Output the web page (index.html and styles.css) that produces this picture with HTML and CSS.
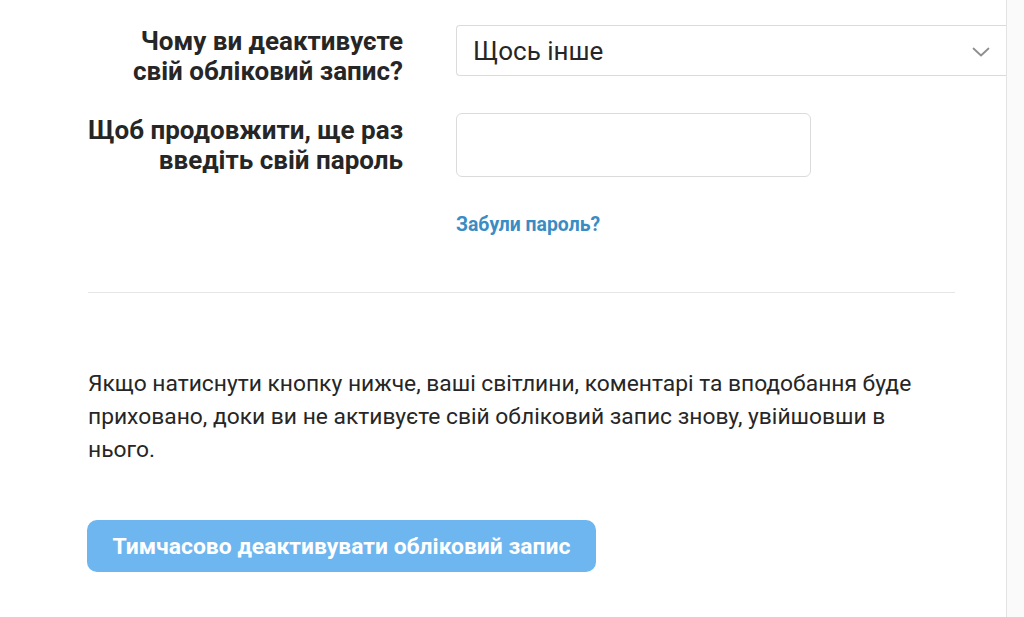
FILE: index.html
```html
<!DOCTYPE html>
<html lang="uk">
<head>
<meta charset="utf-8">
<link rel="stylesheet" href="styles.css">
</head>
<body>
<div class="page">
  <main class="panel">
    <div class="form">
      <div class="row row-reason">
        <label class="label">Чому ви деактивуєте<br>свій обліковий запис?</label>
        <div class="select">
          <span class="select-text">Щось інше</span>
          <svg class="chevron" width="18" height="10" viewBox="0 0 18 10"><path d="M1.5 1.5 L9 8.5 L16.5 1.5" fill="none" stroke="#8e8e8e" stroke-width="1.8" stroke-linecap="round" stroke-linejoin="round"/></svg>
        </div>
      </div>
      <div class="row row-pass">
        <label class="label">Щоб продовжити, ще раз<br>введіть свій пароль</label>
        <div class="field">
          <div class="input"></div>
          <a class="forgot" href="#">Забули пароль?</a>
        </div>
      </div>
    </div>
    <hr class="divider">
    <p class="info">Якщо натиснути кнопку нижче, ваші світлини, коментарі та вподобання буде приховано, доки ви не активуєте свій обліковий запис знову, увійшовши в нього.</p>
    <button class="btn" type="button">Тимчасово деактивувати обліковий запис</button>
  </main>
  <div class="side"></div>
</div>
</body>
</html>
```

FILE: styles.css
```css
html, body {
  margin: 0;
  padding: 0;
  background: #fafafa;
}
body {
  font-family: Roboto, "Noto Sans", sans-serif;
  color: #262626;
}
.page {
  display: flex;
  height: 617px;
  overflow: hidden;
}
.panel {
  width: 1006px;
  flex: none;
  background: #ffffff;
  border-right: 1px solid #e3e3e3;
  box-sizing: content-box;
}
.side {
  flex: 1;
  background: #fafafa;
}
.form {
  padding-top: 25px;
}
.row {
  display: grid;
  grid-template-columns: 403px 1fr;
  column-gap: 53px;
}
.label {
  text-align: right;
  font-weight: 700;
  font-size: 26px;
  line-height: 30px;
  color: #262626;
  padding-top: 1px;
  white-space: nowrap;
}
.select {
  height: 49px;
  border: 1px solid #dbdbdb;
  border-right: none;
  border-radius: 4px 0 0 4px;
  display: flex;
  align-items: center;
  justify-content: space-between;
  padding-left: 16px;
  padding-right: 16px;
}
.select-text {
  font-size: 26px;
  color: #262626;
}
.chevron {
  margin-top: 2px;
}
.row-pass {
  margin-top: 27px;
}
.row-pass .label {
  padding-top: 2px;
}
.field {
  display: flex;
  flex-direction: column;
  align-items: flex-start;
}
.input {
  width: 353px;
  height: 62px;
  border: 1px solid #dbdbdb;
  border-radius: 6px;
  background: #fff;
}
.forgot {
  margin-top: 38px;
  font-size: 19.4px;
  font-weight: 700;
  line-height: 20px;
  color: #3a8cc4;
  text-decoration: none;
}
.divider {
  margin: 57px 0 0 88px;
  width: 867px;
  border: none;
  border-top: 1px solid #e6e6e6;
  height: 0;
}
.info {
  margin: 74px 0 0 88px;
  width: 835px;
  font-size: 22.8px;
  line-height: 33px;
  color: #262626;
}
.btn {
  margin: 54px 0 0 87px;
  width: 509px;
  height: 52px;
  border: none;
  border-radius: 10px;
  background: #6db6f0;
  color: #ffffff;
  font-family: Roboto, "Noto Sans", sans-serif;
  font-weight: 700;
  font-size: 22.9px;
  padding: 0;
  display: block;
}
```
